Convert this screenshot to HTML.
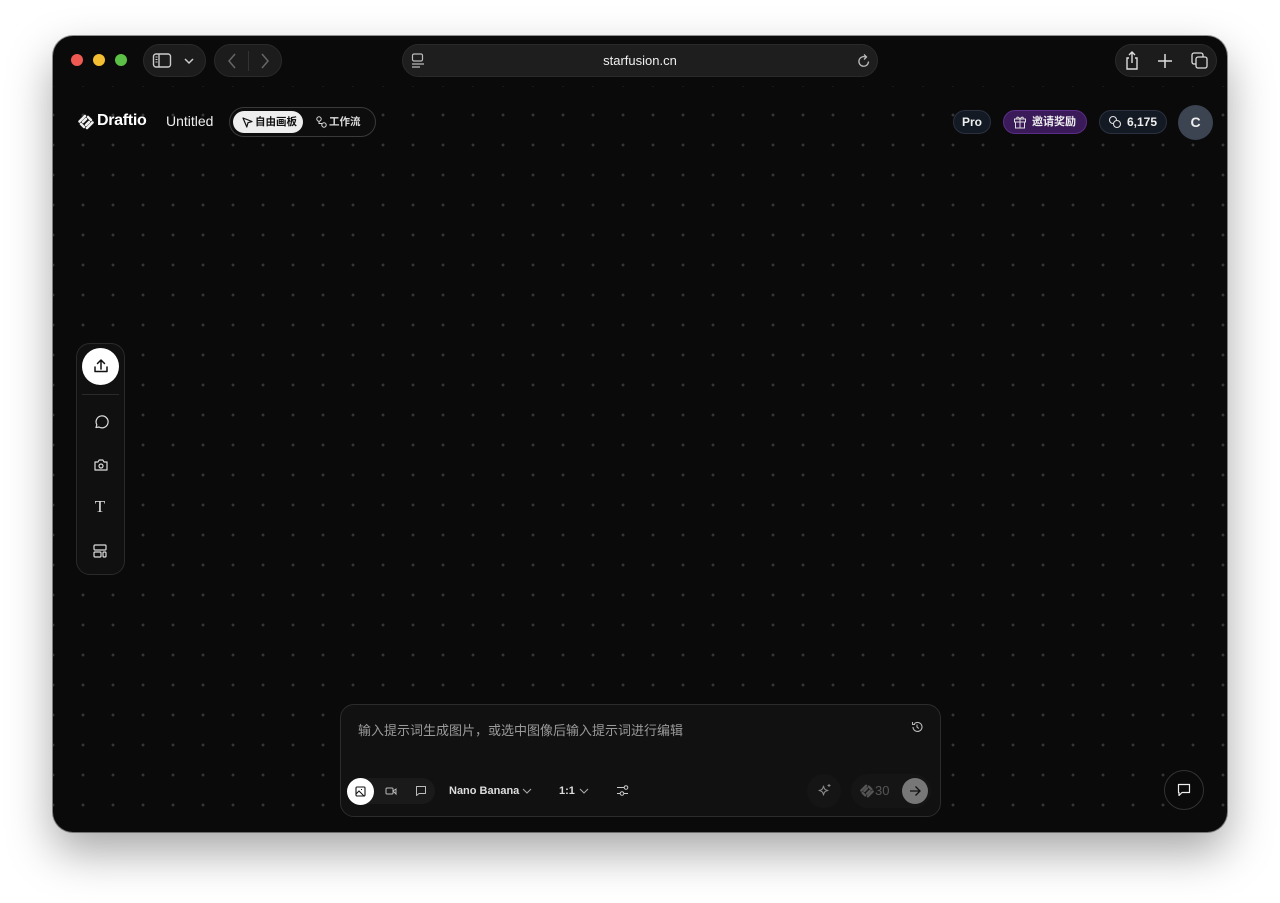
<!DOCTYPE html>
<html><head><meta charset="utf-8"><style>
*{box-sizing:border-box;margin:0;padding:0}
body{width:1280px;height:903px;background:#fff;font-family:"Liberation Sans","Noto Sans CJK SC",sans-serif;position:relative;overflow:hidden}
.win{position:absolute;left:53px;top:36px;width:1174px;height:796px;background:#0a0a0a;border-radius:20px;overflow:hidden;box-shadow:0 20px 45px rgba(0,0,0,.35),0 0 0 1px rgba(0,0,0,.4)}
.abs{position:absolute}
.pill{position:absolute;border-radius:999px;background:#1c1c1c;border:1px solid #2a2a2a}
.dot{position:absolute;width:12px;height:12px;border-radius:50%;top:18px}
svg{display:block}
.t{color:#fff}
</style></head><body>
<div class="win">
<svg class="abs" style="left:0;top:0" width="1174" height="796">
<defs><pattern id="p" x="28" y="17" width="30" height="30" patternUnits="userSpaceOnUse">
<path d="M2 0.5V3.5M0.5 2H3.5" stroke="#45454a" stroke-width="1"/>
</pattern></defs>
<rect x="0" y="50" width="1174" height="746" fill="url(#p)"/>
</svg>

<div class="dot" style="left:18px;background:#ee5a52"></div>
<div class="dot" style="left:40px;background:#f4be33"></div>
<div class="dot" style="left:62px;background:#5cc046"></div>

<div class="pill" style="left:90px;top:8px;width:63px;height:33px">
<svg class="abs" style="left:8px;top:7px" width="20" height="18" viewBox="0 0 20 18"><rect x="1.5" y="2" width="17" height="13" rx="2.5" fill="none" stroke="#ccc" stroke-width="1.4"/><path d="M7 2v13" stroke="#ccc" stroke-width="1.4"/><path d="M3.5 5h2M3.5 7.5h2M3.5 10h2" stroke="#ccc" stroke-width="1"/></svg>
<svg class="abs" style="left:40px;top:12px" width="10" height="8"><path d="M1 2l4 4 4-4" fill="none" stroke="#ccc" stroke-width="1.5"/></svg>
</div>
<div class="pill" style="left:161px;top:8px;width:68px;height:33px">
<svg class="abs" style="left:12px;top:8px" width="10" height="16"><path d="M8 1L2 8l6 7" fill="none" stroke="#666" stroke-width="1.5"/></svg>
<div class="abs" style="left:33px;top:6px;width:1px;height:20px;background:#333"></div>
<svg class="abs" style="left:45px;top:8px" width="10" height="16"><path d="M2 1l6 7-6 7" fill="none" stroke="#666" stroke-width="1.5"/></svg>
</div>

<div class="pill" style="left:349px;top:8px;width:476px;height:33px;background:#1e1e1e">
<svg class="abs" style="left:8px;top:8px" width="14" height="16"><rect x="1.5" y="1" width="10" height="7" rx="1.5" fill="none" stroke="#bbb" stroke-width="1.2"/><path d="M1 11h12M1 14h8" stroke="#bbb" stroke-width="1.2"/></svg>
<div class="abs t" style="left:0;right:0;top:8px;text-align:center;font-size:13px;color:#eee">starfusion.cn</div>
<svg class="abs" style="left:454px;top:8px" width="14" height="16" viewBox="0 0 14 16"><path d="M11.5 8.5A4.8 4.8 0 1 1 8.5 4" fill="none" stroke="#bbb" stroke-width="1.3"/><path d="M7 1.5l2.5 2.5-2.5 2.5" fill="none" stroke="#bbb" stroke-width="1.3"/></svg>
</div>

<div class="pill" style="left:1062px;top:8px;width:102px;height:33px">
<svg class="abs" style="left:8px;top:5px" width="16" height="22"><path d="M5 8H3v11h10V8h-2M8 13V2M5 5l3-3 3 3" fill="none" stroke="#ddd" stroke-width="1.4"/></svg>
<svg class="abs" style="left:42px;top:9px" width="14" height="14"><path d="M7 0v14M0 7h14" stroke="#ddd" stroke-width="1.5"/></svg>
<svg class="abs" style="left:75px;top:7px" width="18" height="18"><rect x="1" y="1" width="11" height="11" rx="2" fill="none" stroke="#ddd" stroke-width="1.3"/><rect x="5" y="5" width="11" height="11" rx="2" fill="#1c1c1c" stroke="#ddd" stroke-width="1.3"/></svg>
</div>

<svg class="abs" style="left:24px;top:77px" width="18" height="18" viewBox="0 0 18 18" fill="none" stroke="#eee" stroke-width="2.6" stroke-linecap="round"><path d="M2.5 8.5L8 3"/><path d="M11 4l3 3"/><path d="M15.5 9.5L10 15"/><path d="M7 14l-3-3"/><path d="M6 9l3-3"/><path d="M12 9l-3 3"/></svg>
<div class="abs t" style="left:44px;top:76px;font-size:16px;font-weight:bold;letter-spacing:-0.3px">Draftio</div>
<div class="abs t" style="left:113px;top:77px;font-size:14px;color:#eee">Untitled</div>
<div class="abs" style="left:176px;top:71px;width:147px;height:30px;border-radius:15px;border:1px solid #3a3a3a;background:#0d0d0d"></div>
<div class="abs" style="left:180px;top:75px;width:70px;height:22px;border-radius:11px;background:#eee"></div>
<svg class="abs" style="left:189px;top:81px" width="11" height="11"><path d="M1 1l9 3.5-4 1.2L4.8 10z" fill="none" stroke="#111" stroke-width="1.2" stroke-linejoin="round"/></svg>
<div class="abs" style="left:202px;top:78px;font-size:10.5px;color:#111;font-weight:bold">自由画板</div>
<svg class="abs" style="left:263px;top:80px" width="11" height="12"><circle cx="3" cy="3" r="2.2" fill="none" stroke="#ddd" stroke-width="1"/><circle cx="8" cy="9" r="2.2" fill="none" stroke="#ddd" stroke-width="1"/><path d="M3 5.5v2h3" fill="none" stroke="#ddd"/></svg>
<div class="abs" style="left:276px;top:78px;font-size:10.5px;color:#ddd;font-weight:bold">工作流</div>

<div class="abs" style="left:900px;top:74px;width:38px;height:24px;border-radius:12px;background:#141a24;border:1px solid #2b3140;color:#eee;font-size:12px;font-weight:bold;text-align:center;line-height:22px">Pro</div>
<div class="abs" style="left:950px;top:74px;width:84px;height:24px;border-radius:12px;background:#3a1a58;border:1px solid #5a2d86;color:#eee;font-size:11px;font-weight:bold;line-height:22px;padding-left:28px">邀请奖励</div>
<svg class="abs" style="left:960px;top:79px" width="14" height="14"><rect x="1.5" y="4" width="11" height="3" fill="none" stroke="#ddd"/><rect x="2.5" y="7" width="9" height="6" fill="none" stroke="#ddd"/><path d="M7 4v9M7 4C5 1 3 2 4 4M7 4c2-3 4-2 3 0" fill="none" stroke="#ddd"/></svg>
<div class="abs" style="left:1046px;top:74px;width:68px;height:24px;border-radius:12px;background:#141a24;border:1px solid #2b3140;color:#eee;font-size:12px;font-weight:bold;line-height:22px;padding-left:27px">6,175</div>
<svg class="abs" style="left:1055px;top:79px" width="14" height="14"><circle cx="5" cy="5" r="3.5" fill="none" stroke="#ddd" stroke-width="1.1"/><circle cx="9" cy="9" r="3.5" fill="#141a24" stroke="#ddd" stroke-width="1.1"/></svg>
<div class="abs" style="left:1125px;top:69px;width:35px;height:35px;border-radius:50%;background:#3c4452;color:#eee;font-size:14px;font-weight:bold;text-align:center;line-height:35px">C</div>

<div class="abs" style="left:23px;top:307px;width:49px;height:232px;border-radius:14px;background:#101010;border:1px solid #2a2a2a"></div>
<div class="abs" style="left:29px;top:312px;width:37px;height:37px;border-radius:50%;background:#fff"></div>
<svg class="abs" style="left:40px;top:322px" width="16" height="16"><path d="M8 11V2M4.5 5.5L8 2l3.5 3.5M2 9v4.5h12V9" fill="none" stroke="#111" stroke-width="1.5" stroke-linecap="round" stroke-linejoin="round"/></svg>
<div class="abs" style="left:29px;top:358px;width:37px;height:1px;background:#2a2a2a"></div>
<svg class="abs" style="left:40px;top:378px" width="16" height="16"><path d="M3 13.5l.8-2.8A6 6 0 1 1 6 13z" fill="none" stroke="#ddd" stroke-width="1.2" stroke-linejoin="round"/></svg>
<svg class="abs" style="left:40px;top:421px" width="16" height="16"><path d="M2 5h3l1.2-2h3.6L11 5h3v8H2z" fill="none" stroke="#ddd" stroke-width="1.2" stroke-linejoin="round"/><circle cx="8" cy="9" r="2" fill="none" stroke="#ddd" stroke-width="1.2"/></svg>
<div class="abs" style="left:38px;top:461px;width:18px;font-family:'Liberation Serif',serif;font-size:17px;color:#ddd;text-align:center">T</div>
<svg class="abs" style="left:39px;top:507px" width="16" height="16"><rect x="2" y="2" width="12" height="5" rx="1" fill="none" stroke="#ddd" stroke-width="1.2"/><rect x="2" y="9" width="7" height="5" rx="1" fill="none" stroke="#ddd" stroke-width="1.2"/><rect x="11" y="9" width="3" height="5" rx="1" fill="none" stroke="#ddd" stroke-width="1.2"/></svg>

<div class="abs" style="left:287px;top:668px;width:601px;height:113px;border-radius:14px;background:#111;border:1px solid #2c2c2c"></div>
<div class="abs" style="left:305px;top:684px;font-size:13px;color:#9a9a9a">输入提示词生成图片，或选中图像后输入提示词进行编辑</div>
<svg class="abs" style="left:858px;top:685px" width="12" height="12"><path d="M2 6a4.5 4.5 0 1 0 1.3-3.2M1.5 1v2.5H4M6 3.5V6l1.8 1.5" fill="none" stroke="#bbb" stroke-width="1.1"/></svg>
<div class="abs" style="left:294px;top:742px;width:88px;height:26px;border-radius:13px;background:#1a1a1a"></div>
<div class="abs" style="left:294px;top:742px;width:27px;height:27px;border-radius:50%;background:#fff"></div>
<svg class="abs" style="left:302px;top:750px" width="11" height="11"><rect x="1" y="1" width="9" height="9" rx="1" fill="none" stroke="#111" stroke-width="1.1"/><path d="M1 8l3-3 5 5M6 3.5h1" stroke="#111" fill="none"/></svg>
<svg class="abs" style="left:332px;top:750px" width="12" height="10"><rect x="1" y="2" width="7" height="6" rx="1" fill="none" stroke="#bbb"/><path d="M8 5l3-2v5z" fill="none" stroke="#bbb"/></svg>
<svg class="abs" style="left:362px;top:749px" width="12" height="12"><path d="M1.5 1.5h9v7H4l-2.5 2z" fill="none" stroke="#bbb" stroke-linejoin="round"/></svg>
<div class="abs" style="left:396px;top:749px;font-size:11px;color:#ddd;font-weight:bold">Nano Banana</div>
<svg class="abs" style="left:469px;top:752px" width="10" height="7"><path d="M1 1l4 4 4-4" fill="none" stroke="#aaa" stroke-width="1.1"/></svg>
<div class="abs" style="left:506px;top:749px;font-size:11px;color:#ddd;font-weight:bold">1:1</div>
<svg class="abs" style="left:526px;top:752px" width="10" height="7"><path d="M1 1l4 4 4-4" fill="none" stroke="#aaa" stroke-width="1.1"/></svg>
<svg class="abs" style="left:563px;top:748px" width="13" height="13"><path d="M1 3.5h7M1 9.5h3M8 9.5h4" stroke="#ccc" stroke-width="1.1"/><circle cx="10" cy="3.5" r="1.8" fill="none" stroke="#ccc"/><circle cx="6" cy="9.5" r="1.8" fill="none" stroke="#ccc"/></svg>
<div class="abs" style="left:754px;top:738px;width:34px;height:34px;border-radius:50%;background:#151515"></div>
<svg class="abs" style="left:764px;top:747px" width="15" height="15"><path d="M6.5 3c.6 3 1.5 4 4.5 4.5-3 .5-3.9 1.5-4.5 4.5C5.9 9 5 8 2 7.5 5 7 5.9 6 6.5 3z" fill="none" stroke="#888" stroke-width="1.1" stroke-linejoin="round"/><path d="M12 1v3M10.5 2.5h3" stroke="#888"/></svg>
<div class="abs" style="left:798px;top:738px;width:80px;height:34px;border-radius:17px;background:#151515"></div>
<svg class="abs" style="left:806px;top:747px" width="16" height="16" viewBox="0 0 18 18" fill="none" stroke="#555" stroke-width="2.6" stroke-linecap="round"><path d="M2.5 8.5L8 3"/><path d="M11 4l3 3"/><path d="M15.5 9.5L10 15"/><path d="M7 14l-3-3"/><path d="M6 9l3-3"/><path d="M12 9l-3 3"/></svg>
<div class="abs" style="left:822px;top:747px;font-size:13px;color:#555">30</div>
<div class="abs" style="left:849px;top:742px;width:26px;height:26px;border-radius:50%;background:#777"></div>
<svg class="abs" style="left:856px;top:749px" width="12" height="12"><path d="M1 6h10M6.5 1.5L11 6l-4.5 4.5" fill="none" stroke="#111" stroke-width="1.3"/></svg>

<div class="abs" style="left:1111px;top:734px;width:40px;height:40px;border-radius:50%;background:#0a0a0a;border:1px solid #333"></div>
<svg class="abs" style="left:1124px;top:747px" width="14" height="14"><path d="M1.5 1.5h11v8H5L2 12.5V9.5h-.5z" fill="none" stroke="#eee" stroke-width="1.2" stroke-linejoin="round"/></svg>
</div>
</body></html>
